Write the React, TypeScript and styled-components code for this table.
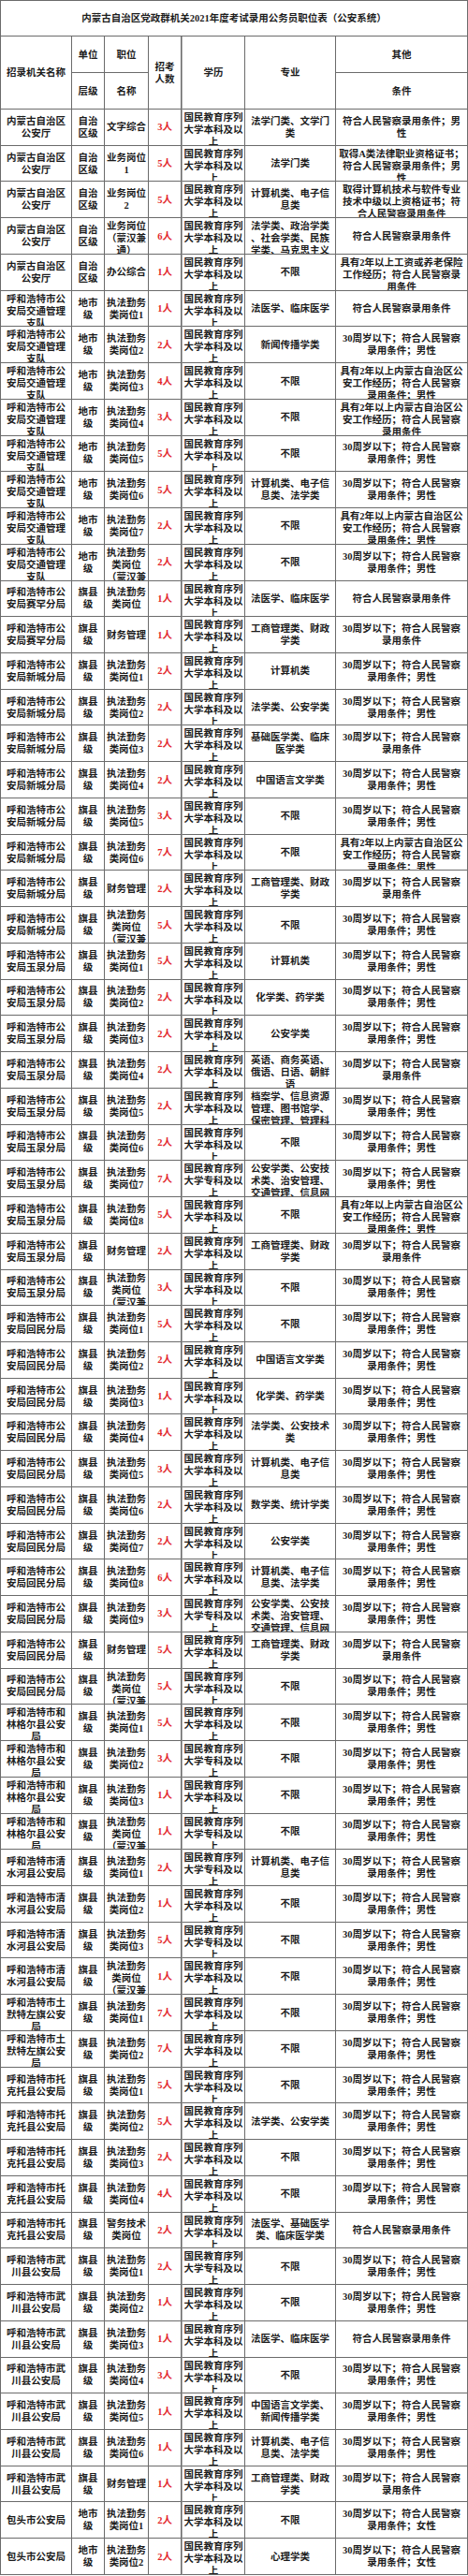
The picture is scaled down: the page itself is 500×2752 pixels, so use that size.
import React from "react";
import styled, { createGlobalStyle } from "styled-components";

const GlobalStyle = createGlobalStyle`
  html, body {
    margin: 0;
    padding: 0;
    background: #ffffff;
  }
  body {
    font-family: "Liberation Serif", "Noto Sans CJK SC", serif;
    font-size: 10.5px;
    font-weight: 700;
    color: #1c1c1c;
  }
`;

const LINE = "#6b6b6b";

const EDU: Record<string, string> = {
  b: "国民教育序列\n大学本科及以\n上",
  z: "国民教育序列\n大学专科及以\n上",
};

const ORG: Record<string, string> = {
  nmg: "内蒙古自治区\n公安厅",
  jt: "呼和浩特市公\n安局交通管理\n支队",
  sh: "呼和浩特市公\n安局赛罕分局",
  xc: "呼和浩特市公\n安局新城分局",
  yq: "呼和浩特市公\n安局玉泉分局",
  hm: "呼和浩特市公\n安局回民分局",
  hl: "呼和浩特市和\n林格尔县公安\n局",
  qs: "呼和浩特市清\n水河县公安局",
  tm: "呼和浩特市土\n默特左旗公安\n局",
  tk: "呼和浩特市托\n克托县公安局",
  wc: "呼和浩特市武\n川县公安局",
  bt: "包头市公安局",
};

const LEVEL: Record<string, string> = {
  zz: "自治\n区级",
  ds: "地市\n级",
  qx: "旗县\n级",
};

const OTHER: Record<string, string> = {
  A: "符合人民警察录用条件；男\n性",
  B: "取得A类法律职业资格证书；\n符合人民警察录用条件；男\n性",
  C: "取得计算机技术与软件专业\n技术中级以上资格证书；符\n合人民警察录用条件",
  D: "符合人民警察录用条件",
  E: "具有2年以上工资或养老保险\n工作经历；符合人民警察录\n用条件",
  F: "30周岁以下；符合人民警察\n录用条件；男性",
  G: "具有2年以上内蒙古自治区公\n安工作经历；符合人民警察\n录用条件；男性",
  H: "具有2年以上内蒙古自治区公\n安工作经历；符合人民警察\n录用条件",
  I: "30周岁以下；符合人民警察\n录用条件",
  J: "30周岁以下；符合人民警察\n录用条件；女性",
};

const zf = (n: number) => `执法勤务\n类岗位${n}`;
// the sheet cuts this one after its third line
const MH = "执法勤务\n类岗位\n（蒙汉兼";
const CW = "财务管理";
const BX = "不限";
const GS = "工商管理类、财政\n学类";
const JSD = "计算机类、电子信\n息类、法学类";
const JS = "计算机类、电子信\n息类";
const GA = "公安学类、公安技\n术类、治安管理、\n交通管理、信息网";

type Row = [string, string, string, number, string, string, string];

const rows: Row[] = [
  ["nmg", "zz", "文字综合", 3, "b", "法学门类、文学门\n类", "A"],
  ["nmg", "zz", "业务岗位\n1", 5, "b", "法学门类", "B"],
  ["nmg", "zz", "业务岗位\n2", 5, "b", JS, "C"],
  ["nmg", "zz", "业务岗位\n（蒙汉兼\n通）", 6, "b", "法学类、政治学类\n、社会学类、民族\n学类、马克思主义", "D"],
  ["nmg", "zz", "办公综合", 1, "b", BX, "E"],
  ["jt", "ds", zf(1), 1, "b", "法医学、临床医学", "D"],
  ["jt", "ds", zf(2), 2, "b", "新闻传播学类", "F"],
  ["jt", "ds", zf(3), 4, "b", BX, "G"],
  ["jt", "ds", zf(4), 3, "b", BX, "H"],
  ["jt", "ds", zf(5), 5, "b", BX, "F"],
  ["jt", "ds", zf(6), 5, "b", JSD, "F"],
  ["jt", "ds", zf(7), 2, "b", BX, "G"],
  ["jt", "ds", MH, 2, "b", BX, "F"],
  ["sh", "qx", "执法勤务\n类岗位", 1, "b", "法医学、临床医学", "D"],
  ["sh", "qx", CW, 1, "b", GS, "I"],
  ["xc", "qx", zf(1), 2, "b", "计算机类", "F"],
  ["xc", "qx", zf(2), 2, "b", "法学类、公安学类", "F"],
  ["xc", "qx", zf(3), 2, "b", "基础医学类、临床\n医学类", "I"],
  ["xc", "qx", zf(4), 2, "b", "中国语言文学类", "F"],
  ["xc", "qx", zf(5), 3, "b", BX, "F"],
  ["xc", "qx", zf(6), 7, "b", BX, "G"],
  ["xc", "qx", CW, 2, "b", GS, "I"],
  ["xc", "qx", MH, 5, "b", BX, "F"],
  ["yq", "qx", zf(1), 5, "b", "计算机类", "F"],
  ["yq", "qx", zf(2), 2, "b", "化学类、药学类", "F"],
  ["yq", "qx", zf(3), 2, "b", "公安学类", "F"],
  ["yq", "qx", zf(4), 2, "b", "英语、商务英语、\n俄语、日语、朝鲜\n语", "I"],
  ["yq", "qx", zf(5), 2, "b", "档案学、信息资源\n管理、图书馆学、\n保密管理、管理科", "F"],
  ["yq", "qx", zf(6), 2, "b", BX, "F"],
  ["yq", "qx", zf(7), 7, "z", GA, "F"],
  ["yq", "qx", zf(8), 5, "b", BX, "G"],
  ["yq", "qx", CW, 2, "b", GS, "I"],
  ["yq", "qx", MH, 3, "b", BX, "F"],
  ["hm", "qx", zf(1), 5, "b", BX, "F"],
  ["hm", "qx", zf(2), 2, "b", "中国语言文学类", "F"],
  ["hm", "qx", zf(3), 1, "b", "化学类、药学类", "F"],
  ["hm", "qx", zf(4), 4, "b", "法学类、公安技术\n类", "F"],
  ["hm", "qx", zf(5), 3, "b", JS, "F"],
  ["hm", "qx", zf(6), 2, "b", "数学类、统计学类", "F"],
  ["hm", "qx", zf(7), 2, "b", "公安学类", "F"],
  ["hm", "qx", zf(8), 6, "b", JSD, "F"],
  ["hm", "qx", zf(9), 3, "z", GA, "F"],
  ["hm", "qx", CW, 5, "b", GS, "I"],
  ["hm", "qx", MH, 5, "b", BX, "F"],
  ["hl", "qx", zf(1), 5, "b", BX, "F"],
  ["hl", "qx", zf(2), 3, "z", BX, "F"],
  ["hl", "qx", zf(3), 1, "b", BX, "F"],
  ["hl", "qx", MH, 1, "z", BX, "F"],
  ["qs", "qx", zf(1), 2, "z", JS, "F"],
  ["qs", "qx", zf(2), 1, "b", BX, "F"],
  ["qs", "qx", zf(3), 5, "z", BX, "F"],
  ["qs", "qx", MH, 1, "b", BX, "F"],
  ["tm", "qx", zf(1), 7, "b", BX, "F"],
  ["tm", "qx", zf(2), 7, "b", BX, "F"],
  ["tk", "qx", zf(1), 5, "b", BX, "F"],
  ["tk", "qx", zf(2), 5, "b", "法学类、公安学类", "F"],
  ["tk", "qx", zf(3), 2, "b", BX, "F"],
  ["tk", "qx", zf(4), 4, "b", BX, "F"],
  ["tk", "qx", "警务技术\n类岗位", 2, "b", "法医学、基础医学\n类、临床医学类", "D"],
  ["wc", "qx", zf(1), 2, "z", BX, "F"],
  ["wc", "qx", zf(2), 1, "b", BX, "F"],
  ["wc", "qx", zf(3), 1, "b", "法医学、临床医学", "D"],
  ["wc", "qx", zf(4), 3, "b", BX, "F"],
  ["wc", "qx", zf(5), 1, "b", "中国语言文学类、\n新闻传播学类", "F"],
  ["wc", "qx", zf(6), 1, "b", JSD, "F"],
  ["wc", "qx", CW, 1, "b", GS, "I"],
  ["bt", "ds", zf(1), 2, "b", BX, "J"],
  ["bt", "ds", zf(2), 2, "b", "心理学类", "J"],
];

const Sheet = styled.div`
  display: grid;
  grid-template-columns: 76px 35px 47px 35px 68px 97px 141px;
  grid-template-rows: 38px 39px 39px;
  grid-auto-rows: 38.74px;
  width: 500px;
  box-sizing: border-box;
  border-left: 1px solid ${LINE};
  border-top: 1px solid ${LINE};
`;

const Cell = styled.div<{ $red?: boolean; $split?: boolean }>`
  box-sizing: border-box;
  display: flex;
  flex-direction: column;
  justify-content: safe center;
  align-items: center;
  overflow: hidden;
  padding: 2px 0;
  text-align: center;
  white-space: pre;
  line-height: 13px;
  border-right: 1px solid ${LINE};
  border-bottom: 1px solid ${LINE};
  ${(p) => (p.$split ? "border-left: 1px solid #a8a8a8;" : "")}
  color: ${(p) => (p.$red ? "#e2262c" : "#1c1c1c")};
`;

const Title = styled(Cell)`
  grid-column: 1 / -1;
`;

const Head = styled(Cell)<{ $rows?: number }>`
  grid-row: span ${(p) => p.$rows ?? 1};
`;

export default function App() {
  return (
    <>
      <GlobalStyle />
      <Sheet>
        <Title>内蒙古自治区党政群机关2021年度考试录用公务员职位表（公安系统）</Title>

        <Head $rows={2}>招录机关名称</Head>
        <Head>单位</Head>
        <Head>职位</Head>
        <Head $rows={2}>{"招考\n人数"}</Head>
        <Head $rows={2} $split>学历</Head>
        <Head $rows={2}>专业</Head>
        <Head>其他</Head>
        <Head>层级</Head>
        <Head>名称</Head>
        <Head>条件</Head>

        {rows.map(([org, lv, pos, num, edu, major, other], i) => (
          <React.Fragment key={i}>
            <Cell>{ORG[org]}</Cell>
            <Cell>{LEVEL[lv]}</Cell>
            <Cell>{pos}</Cell>
            <Cell $red>{`${num}人`}</Cell>
            <Cell $split>{EDU[edu]}</Cell>
            <Cell>{major}</Cell>
            <Cell>{OTHER[other]}</Cell>
          </React.Fragment>
        ))}
      </Sheet>
    </>
  );
}
